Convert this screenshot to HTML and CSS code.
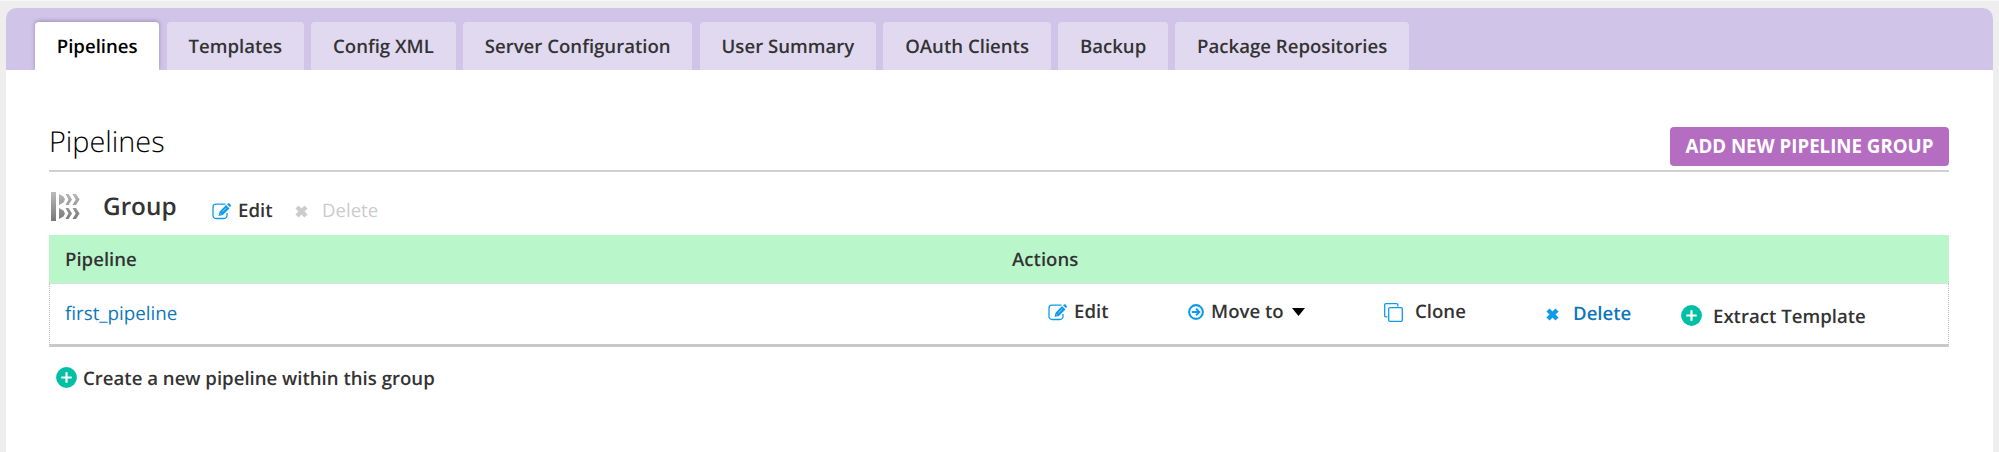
FILE: index.html
```html
<!DOCTYPE html>
<html lang="en">
<head>
<meta charset="utf-8">
<title>Pipelines</title>
<link rel="stylesheet" href="styles.css">
</head>
<body>
<svg class="defs" aria-hidden="true">
  <symbol id="edit" viewBox="0 0 19 17"><path d="M13.5 1.2H4A3 3 0 0 0 1 4.200V12.500A3 3 0 0 0 4 15.500H12A3 3 0 0 0 15 12.500V10" fill="none" stroke="currentColor" stroke-width="1.300"/><path d="M14 2L17.500 5.400L10.800 12L6.600 13.100L7.500 8.700ZM15 1.200L15.900.4Q16.800-.2 17.600.6L18.600 1.700Q19.300 2.500 18.600 3.300L18.100 4.200Z" fill="currentColor"/><path d="M10.300 8.900L14.200 5.100M8.200 10.500L9.300 11.500" stroke="#fff" stroke-width=".5"/></symbol>
  <symbol id="cross" viewBox="0 0 13 13"><path d="M2 2L11 11M11 2L2 11" stroke="currentColor" stroke-width="4.400"/></symbol>
  <symbol id="plus" viewBox="0 0 21 21"><circle cx="10.500" cy="10.500" r="10.400" fill="#00bfa5"/><path d="M5.300 10.500H15.700M10.500 5.300V15.700" stroke="#fff" stroke-width="2.200"/></symbol>
  <symbol id="move" viewBox="0 0 16 16"><circle cx="8" cy="8" r="6.900" fill="none" stroke="currentColor" stroke-width="2.100"/><path d="M3.800 8H11M8 4.600L11.400 8L8 11.400" fill="none" stroke="currentColor" stroke-width="1.900"/></symbol>
  <symbol id="clone" viewBox="0 0 19 19"><g fill="none" stroke="currentColor" stroke-width="1.300"><path d="M3.500 13.800H1.800Q.7 13.800.7 12.700V1.800Q.7.700 1.800.700H12.700Q13.800.7 13.800 1.800V3.500"/><rect x="4.700" y="4.700" width="13.600" height="13.600" rx="1.100"/></g></symbol>
</svg>
<main class="panel">
  <nav class="tabs">
    <a class="tab active">Pipelines</a><a class="tab">Templates</a><a class="tab">Config XML</a><a class="tab">Server Configuration</a><a class="tab">User Summary</a><a class="tab">OAuth Clients</a><a class="tab">Backup</a><a class="tab">Package Repositories</a>
  </nav>
  <section class="content">
    <header class="heading">
      <h1>Pipelines</h1>
      <button class="add">ADD NEW PIPELINE GROUP</button>
    </header>
    <div class="group">
      <svg class="group-icon" viewBox="0 0 29 29">
        <defs><linearGradient id="shade" x1="0" y1="0" x2="0" y2="29" gradientUnits="userSpaceOnUse"><stop offset="0" stop-color="#bbb"/><stop offset="1" stop-color="#777"/></linearGradient></defs>
        <g fill="url(#shade)"><path d="M0 0H5V29H0Z"/><path d="M8 2L12.500 4.500L14 7.500L12.500 10.500L8 13ZM14.500 2H17.500L21 7.500L17.500 13H14.500L17.500 7.500ZM21.500 2H25L28.600 7.500L25 13H21.500L24.700 7.500Z"/><path d="M8 16L12.500 18.500L14 21.500L12.500 24.500L8 27ZM14.500 16H17.500L21 21.500L17.500 27H14.500L17.500 21.500ZM21.500 16H25L28.600 21.500L25 27H21.500L24.700 21.500Z"/></g>
      </svg>
      <h2>Group</h2>
      <a class="action group-edit"><svg class="icon-edit"><use href="#edit"/></svg>Edit</a>
      <a class="action disabled"><svg class="icon-cross"><use href="#cross"/></svg>Delete</a>
    </div>
    <div class="table">
      <div class="row head"><span>Pipeline</span><span class="actions-title">Actions</span></div>
      <div class="row body">
        <a class="name">first_pipeline</a>
        <a class="action"><svg class="icon-edit"><use href="#edit"/></svg>Edit</a>
        <a class="action"><svg class="icon-move"><use href="#move"/></svg>Move to<svg class="caret" viewBox="0 0 13 8"><path d="M0 0H13L6.500 8Z"/></svg></a>
        <a class="action"><svg class="icon-clone"><use href="#clone"/></svg>Clone</a>
        <a class="action delete"><svg class="icon-cross"><use href="#cross"/></svg>Delete</a>
        <a class="action extract"><svg class="icon-plus"><use href="#plus"/></svg><span>Extract Template</span></a>
      </div>
    </div>
    <a class="action create"><svg class="icon-plus"><use href="#plus"/></svg><span>Create a new pipeline within this group</span></a>
  </section>
</main>
</body>
</html>
```
FILE: styles.css
```css
* { box-sizing: border-box; }
body { margin: 0; height: 452px; overflow: hidden; padding: 7px 6px 0; border-top: 1px solid #f8f8f8; background: #eee; color: #333; font: 600 18.600px/26px "Open Sans", sans-serif; text-rendering: geometricPrecision; }
.defs { position: absolute; width: 0; height: 0; }
.panel { height: 444px; background: #fff; border-radius: 10px 10px 0 0; overflow: hidden; }
.tabs { display: flex; gap: 7.400px; height: 62px; padding: 14px 0 0 29px; background: #d0c4e8; overflow: hidden; }
.tab { height: 48px; padding: 12px 21.750px 0; border-radius: 4px 4px 0 0; background: #e0d9f0; white-space: nowrap; }
.tab.active { background: #fff; color: #000; box-shadow: 0 -1px 4px rgba(80, 60, 110, .4); }
.content { padding: 0 44px 0 43px; }
.heading { display: flex; justify-content: space-between; height: 102px; border-bottom: 2px solid #d0d0d0; }
h1 { margin: 0; padding-top: 51px; font-size: 28.800px; line-height: 42px; font-weight: 300; color: #000; }
.add { margin: 57px 0 0; width: 279px; height: 39px; padding: 0 0 2px; border: 0; border-radius: 4px; background: #b56dc2; color: #fff; font: 700 18.700px/37px "Open Sans", sans-serif; white-space: nowrap; }
.group { display: flex; align-items: flex-start; height: 63px; padding-left: 2px; }
.group-icon { width: 29px; height: 29px; margin-top: 20px; }
h2 { margin: 17px 0 0 23px; width: 109px; font-size: 24.300px; line-height: 36px; font-weight: 600; }
.action { display: flex; align-items: center; white-space: nowrap; }
.action svg { flex: none; color: #109bea; }
.icon-edit { width: 19px; height: 17px; margin-right: 7px; }
.icon-cross { width: 13px; height: 13px; margin-right: 14px; }
.icon-move { width: 16px; height: 16px; margin-right: 7px; }
.icon-clone { width: 19px; height: 19px; margin-right: 12px; }
.icon-plus { width: 21px; height: 21px; margin-right: 11px; }
.action .caret { width: 13px; height: 8px; margin-left: 8px; color: #000; }
.group .action { margin-top: 26px; }
.group-edit { width: 83px; }
.group .disabled { color: #ccc; font-weight: 400; }
.group .disabled svg { color: #ccc; }
.row { display: grid; padding-left: 16px; }
.head { grid-template-columns: 947px 1fr; height: 48px; padding-top: 12px; background: #b9f6ca; }
.body { grid-template-columns: 983px 140px 196px 162px 135px 1fr; height: 64px; padding-top: 15px; padding-left: 15px; border: 1px dotted #bbb; border-top: 1px solid #ddd; border-bottom: 3px solid #c8c8c8; align-items: start; }
.name { font-weight: 400; font-size: 18.750px; color: #0d77bd; padding-top: 2px; }
.delete { color: #0d77bd; padding-top: 2px; }
.extract { padding-top: 2px; }
.extract span { padding-top: 3px; }
.create { padding: 16px 0 0 7px; }
.create .icon-plus { margin-right: 6px; }
.create span { padding-top: 3px; }
```
